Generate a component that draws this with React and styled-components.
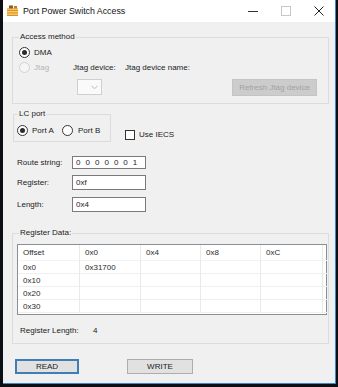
import React from 'react'
import styled, { createGlobalStyle } from 'styled-components'

const Global = createGlobalStyle`
  html, body { margin: 0; padding: 0; background: #0c0f14; }
  body { width: 338px; height: 387px; overflow: hidden; }
`

const Window = styled.div`
  margin-left: 3px;
  width: 333px;
  height: 384px;
  box-sizing: border-box;
  border-right: 1px solid #3f86cf;
  border-bottom: 1px solid #3f86cf;
  background: #f0f0f0;
  display: flex;
  flex-direction: column;
  font-family: "Liberation Sans", Arial, sans-serif;
  font-size: 8px;
  color: #1b1b1b;
`

const TitleBar = styled.div`
  height: 22px;
  background: #fff;
  display: flex;
  align-items: center;
  padding-left: 3px;
`

const TitleText = styled.div`
  margin-left: 4px;
  font-size: 8.8px;
  color: #111;
  flex: 1;
`

const Controls = styled.div`
  display: flex;
  height: 22px;
`

const Ctrl = styled.div`
  width: 33px;
  height: 22px;
  display: flex;
  align-items: center;
  justify-content: center;
`

const Body = styled.div`
  flex: 1;
  display: flex;
  flex-direction: column;
  padding: 0 6px 0 9px;
`

const Group = styled.fieldset`
  margin: ${p => p.$mt || 0}px 0 0 ${p => p.$ml || 0}px;
  padding: ${p => p.$pad};
  border: 1px solid #dcdcdc;
  width: ${p => p.$w ? `${p.$w}px` : 'auto'};
  box-sizing: border-box;
  min-width: 0;
`

const Legend = styled.legend`
  padding: 0 1px;
  margin-left: ${p => p.$ml || 0}px;
  line-height: 10px;
  font-size: 8px;
  color: #1b1b1b;
`

const Row = styled.div`
  display: flex;
  align-items: ${p => p.$align || 'center'};
  margin-top: ${p => p.$mt || 0}px;
  padding-left: ${p => p.$pl || 0}px;
`

const Radio = styled.span`
  width: 11px;
  height: 11px;
  flex: none;
  box-sizing: border-box;
  border-radius: 50%;
  border: 1px solid ${p => (p.$disabled ? '#d2d2d2' : '#333')};
  background: ${p => (p.$disabled ? '#f6f6f6' : '#fff')};
  display: flex;
  align-items: center;
  justify-content: center;
  &::after {
    content: '';
    width: 5px;
    height: 5px;
    border-radius: 50%;
    background: #2a2a2a;
    display: ${p => (p.$checked ? 'block' : 'none')};
  }
`

const Label = styled.span`
  margin-left: ${p => p.$ml || 0}px;
  margin-bottom: ${p => p.$mb || 0}px;
  width: ${p => (p.$w ? `${p.$w}px` : 'auto')};
  flex: none;
  color: ${p => (p.$disabled ? '#b4b4b4' : '#1b1b1b')};
  line-height: 10px;
  white-space: nowrap;
`

const Combo = styled.div`
  margin-left: 58px;
  width: 25px;
  height: 16px;
  box-sizing: border-box;
  border: 1px solid #d0d0d0;
  background: #fafafa;
  display: flex;
  align-items: center;
  justify-content: flex-end;
  padding-right: 3px;
`

const WinButton = styled.div`
  width: ${p => p.$w}px;
  height: ${p => p.$h || 15}px;
  margin-left: ${p => (p.$auto ? 'auto' : `${p.$ml || 0}px`)};
  box-sizing: border-box;
  border: ${p => (p.$focus ? '2px solid #3e7fb8' : `1px solid ${p.$disabled ? '#c4c4c4' : '#adadad'}`)};
  background: ${p => (p.$disabled ? '#cccccc' : '#e1e1e1')};
  color: ${p => (p.$disabled ? '#a3a3a3' : '#1b1b1b')};
  display: flex;
  align-items: center;
  justify-content: center;
  font-size: 8px;
`

const Check = styled.span`
  margin-left: 14px;
  margin-bottom: 2px;
  width: 10px;
  height: 10px;
  box-sizing: border-box;
  border: 1px solid #333;
  background: #fff;
`

const FormRow = styled.div`
  display: flex;
  align-items: center;
  margin-top: ${p => p.$mt}px;
  padding-left: 5px;
`

const TextBox = styled.div`
  width: 74px;
  height: ${p => p.$h}px;
  box-sizing: border-box;
  border: 1px solid #7a7a7a;
  background: #fff;
  display: flex;
  align-items: center;
  padding-left: 3px;
  letter-spacing: ${p => (p.$spaced ? '1.4px' : '0')};
  font-size: 8px;
`

const Grid = styled.div`
  width: 310px;
  height: 71px;
  box-sizing: border-box;
  border: 1px solid #8a8f96;
  background: #fff;
  display: grid;
  grid-template-columns: 62px 61px 60px 60px 62px 1fr;
  grid-template-rows: 16px repeat(4, 13px);
  align-content: start;
`

const Cell = styled.div`
  box-sizing: border-box;
  border-right: 1px solid ${p => (p.$last ? 'transparent' : '#e9e9e9')};
  border-bottom: 1px solid ${p => (p.$head ? '#f3f3f3' : '#efefef')};
  padding-left: 5px;
  display: flex;
  align-items: center;
  color: #2b2b2b;
  white-space: nowrap;
`

const columns = ['Offset', '0x0', '0x4', '0x8', '0xC']
const rows = [
  ['0x0', '0x31700', '', '', ''],
  ['0x10', '', '', '', ''],
  ['0x20', '', '', '', ''],
  ['0x30', '', '', '', ''],
]

function AppIcon() {
  return (
    <svg width="13" height="12" viewBox="0 0 13 12">
      <rect x="1" y="3" width="11" height="8" fill="#d9932a" />
      <rect x="1" y="3" width="11" height="2" fill="#f3c35a" />
      <rect x="1" y="6" width="11" height="1.3" fill="#f6d178" />
      <rect x="1" y="8.5" width="11" height="1.3" fill="#f6d178" />
      <rect x="3" y="0.5" width="4" height="3" fill="#8a5a2b" />
      <rect x="8" y="1" width="3" height="2.5" fill="#c47a2a" />
    </svg>
  )
}

export default function App() {
  return (
    <>
      <Global />
      <Window>
        <TitleBar>
          <AppIcon />
          <TitleText>Port Power Switch Access</TitleText>
          <Controls>
            <Ctrl>
              <svg width="10" height="10" viewBox="0 0 10 10">
                <line x1="0" y1="5.5" x2="10" y2="5.5" stroke="#333" strokeWidth="1" />
              </svg>
            </Ctrl>
            <Ctrl>
              <svg width="10" height="10" viewBox="0 0 10 10">
                <rect x="0.5" y="0.5" width="9" height="9" fill="none" stroke="#c8c8c8" strokeWidth="1" />
              </svg>
            </Ctrl>
            <Ctrl>
              <svg width="10" height="10" viewBox="0 0 10 10">
                <path d="M0.5 0.5 L9.5 9.5 M9.5 0.5 L0.5 9.5" stroke="#222" strokeWidth="1" />
              </svg>
            </Ctrl>
          </Controls>
        </TitleBar>

        <Body>
          <Group $mt={10} $pad="5px 11px 7px 6px">
            <Legend>Access method</Legend>
            <Row>
              <Radio $checked />
              <Label $ml={4}>DMA</Label>
            </Row>
            <Row $mt={4}>
              <Radio $disabled />
              <Label $ml={4} $w={39} $disabled>Jtag</Label>
              <Label $w={52}>Jtag device:</Label>
              <Label>Jtag device name:</Label>
            </Row>
            <Row $mt={6} $align="flex-start">
              <Combo>
                <svg width="7" height="5" viewBox="0 0 7 5">
                  <path d="M0.5 0.8 L3.5 3.8 L6.5 0.8" fill="none" stroke="#b9b9b9" strokeWidth="1" />
                </svg>
              </Combo>
              <WinButton $w={85} $h={17} $auto $disabled>Refresh Jtag device</WinButton>
            </Row>
          </Group>

          <Row $mt={5} $align="flex-end">
            <Group $ml={1} $w={98} $pad="6px 3px 5px 3px">
              <Legend $ml={1}>LC port</Legend>
              <Row>
                <Radio $checked />
                <Label $ml={4} $w={30}>Port A</Label>
                <Radio />
                <Label $ml={5}>Port B</Label>
              </Row>
            </Group>
            <Check />
            <Label $ml={4} $mb={2}>Use IECS</Label>
          </Row>

          <FormRow $mt={14}>
            <Label $w={55}>Route string:</Label>
            <TextBox $h={13} $spaced>0 0 0 0 0 0 1</TextBox>
          </FormRow>
          <FormRow $mt={6}>
            <Label $w={55}>Register:</Label>
            <TextBox $h={15}>0xf</TextBox>
          </FormRow>
          <FormRow $mt={7}>
            <Label $w={55}>Length:</Label>
            <TextBox $h={15}>0x4</TextBox>
          </FormRow>

          <Group $mt={16} $pad="6px 2px 7px 4px">
            <Legend $ml={2}>Register Data:</Legend>
            <Grid>
              {columns.map(c => (
                <Cell key={c} $head>{c}</Cell>
              ))}
              <Cell $head $last />
              {rows.map(r => (
                <React.Fragment key={r[0]}>
                  {r.map((v, i) => (
                    <Cell key={i}>{v}</Cell>
                  ))}
                  <Cell $last />
                </React.Fragment>
              ))}
            </Grid>
            <Row $mt={11} $pl={3}>
              <Label $w={73}>Register Length:</Label>
              <Label>4</Label>
            </Row>
          </Group>

          <Row $mt={15}>
            <WinButton $w={64} $ml={3} $focus>READ</WinButton>
            <WinButton $w={66} $ml={48}>WRITE</WinButton>
          </Row>
        </Body>
      </Window>
    </>
  )
}
